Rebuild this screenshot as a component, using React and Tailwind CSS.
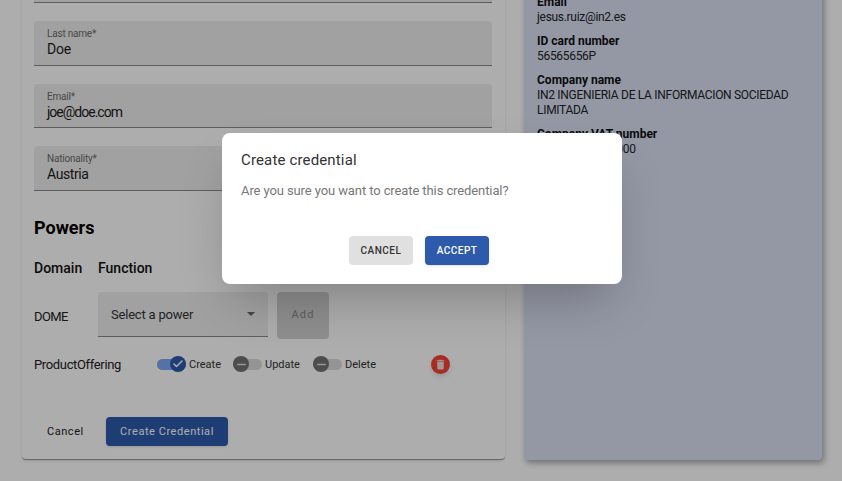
import React from 'react';
import { Check, Minus } from 'lucide-react';

function Field({ label, value, valueClass }) {
  return (
    <div className="h-[44.5px] bg-[#ededed] rounded-t border-b border-[#8a8a8a] px-[13px] pt-[6px]">
      <div className="text-[10px] leading-[13px] tracking-[-0.02em] text-[#6b6b6b]">{label}</div>
      <div className={`text-[14px] leading-[18px] text-[#1c1c1c] ${valueClass}`}>{value}</div>
    </div>
  );
}

function Toggle({ label, on, width }) {
  return (
    <div className={`flex items-center ${width}`}>
      <div className="relative w-[29px] h-[11px] rounded-full flex-none bg-[#dadada]">
        {on ? <div className="absolute inset-0 rounded-full bg-[#81a7f5]" /> : null}
        <div className={`absolute top-[-3px] w-[16px] h-[16px] rounded-full flex items-center justify-center ${on ? 'left-[13px] bg-[#2d5aab]' : 'left-0 bg-[#727272]'}`}>
          {on ? <Check size={12} strokeWidth={3} color="#fff" /> : <Minus size={13} strokeWidth={3} color="#ddd" />}
        </div>
      </div>
      <span className="ml-[3px] pt-[1px] text-[11px] text-[#333]">{label}</span>
    </div>
  );
}

function Info({ label, children }) {
  return (
    <div className="mb-[9px]">
      <div className="text-[12px] leading-[15px] font-bold text-[#111]">{label}</div>
      <div className="text-[12px] leading-[15px] tracking-[-0.3px] text-[#222]">{children}</div>
    </div>
  );
}

export default function App() {
  return (
    <div className="relative h-screen overflow-hidden bg-white font-['Roboto',sans-serif]">
      <div className="flex items-start gap-[19px] pl-[22px] -mt-[41.5px]">
        <div className="w-[483px] h-[501px] flex-none bg-white rounded border-b border-[#999] shadow pl-[12px] pr-[13px]">
          <div className="flex flex-col gap-[18px]">
            <Field label="First name*" value="John" />
            <Field label="Last name*" value="Doe" valueClass="tracking-[-0.2px]" />
            <Field label="Email*" value="joe@doe.com" valueClass="tracking-[-1px]" />
            <Field label="Nationality*" value="Austria" valueClass="tracking-[-0.4px]" />
          </div>
          <h2 className="mt-[26px] text-[18px] leading-[22px] font-bold text-black">Powers</h2>
          <div className="flex mt-[20px] text-[14px] leading-[18px] font-medium text-[#111]">
            <div className="w-[64px]">Domain</div>
            <div>Function</div>
          </div>
          <div className="flex mt-[15px] items-start">
            <div className="w-[64px] pt-[16px] text-[13px] leading-[18px] tracking-[-0.6px] text-[#222]">DOME</div>
            <div className="relative w-[170px] h-[45px] bg-[#ededed] rounded-t border-b border-[#8a8a8a] pl-[13px] pt-[14px] text-[13px] leading-[18px] tracking-[-0.2px] text-[#333]">
              Select a power
              <div className="absolute right-[13px] top-[20px] w-0 h-0 border-x-[4px] border-x-transparent border-t-[4px] border-t-[#666]" />
            </div>
            <div className="ml-[9px] w-[52px] h-[47px] rounded bg-[#d2d2d2] flex items-center justify-center text-[11px] tracking-widest text-[#8a8a8a]">Add</div>
          </div>
          <div className="flex items-center mt-[14px] h-[24px]">
            <div className="w-[123px] text-[13px] tracking-[-0.35px] text-[#222]">ProductOffering</div>
            <Toggle label="Create" on width="w-[76px]" />
            <Toggle label="Update" width="w-[80px]" />
            <Toggle label="Delete" width="w-[80px]" />
            <div className="ml-[38px] w-[19px] h-[19px] rounded-full bg-[#f44336] shadow-md flex items-center justify-center">
              <svg width="13" height="13" viewBox="0 0 24 24" fill="#f4dede"><path d="M6 19c0 1.100.9 2 2 2h8c1.100 0 2-.9 2-2V7H6v12zM19 4h-3.500l-1-1h-5l-1 1H5v2h14V4z" /></svg>
            </div>
          </div>
          <div className="flex items-center mt-[40px]">
            <div className="w-[72px] pl-[13px] pt-[2px] text-[11px] tracking-wider text-[#222]">Cancel</div>
            <div className="w-[122px] h-[29px] rounded bg-[#2d5aab] shadow pt-[2px] flex items-center justify-center text-[11px] tracking-wider text-white">Create Credential</div>
          </div>
        </div>
        <div className="w-[298px] h-[501px] flex-none bg-[#dae1f4] rounded shadow-[2px_3px_6px_rgba(0,0,0,0.35)] pl-[13px] pr-[12px] pt-[36px]">
          <Info label="Email">jesus.ruiz@in2.es</Info>
          <Info label="ID card number">56565656P</Info>
          <Info label="Company name">IN2 INGENIERIA DE LA INFORMACION SOCIEDAD LIMITADA</Info>
          <Info label="Company VAT number">VATES-M00000000</Info>
        </div>
      </div>
      <div className="absolute inset-0 bg-black/32 flex items-start justify-center">
        <div className="ml-[2px] mt-[133px] w-[400px] h-[151px] bg-white rounded-lg shadow-2xl pl-[19px] pr-[25px] pt-[17px]">
          <div className="text-[15px] leading-[20px] tracking-[0.01em] text-[#333]">Create credential</div>
          <div className="mt-[12px] text-[13px] leading-[18px] tracking-[-0.1px] text-[#777]">Are you sure you want to create this credential?</div>
          <div className="flex justify-center gap-[12px] mt-[36px]">
            <div className="w-[64px] h-[29px] rounded bg-[#e0e0e0] flex items-center justify-center text-[10px] font-medium tracking-wider text-[#333]">CANCEL</div>
            <div className="w-[64px] h-[29px] rounded bg-[#2d5aab] shadow flex items-center justify-center text-[10px] font-medium tracking-wider text-white">ACCEPT</div>
          </div>
        </div>
      </div>
    </div>
  );
}
